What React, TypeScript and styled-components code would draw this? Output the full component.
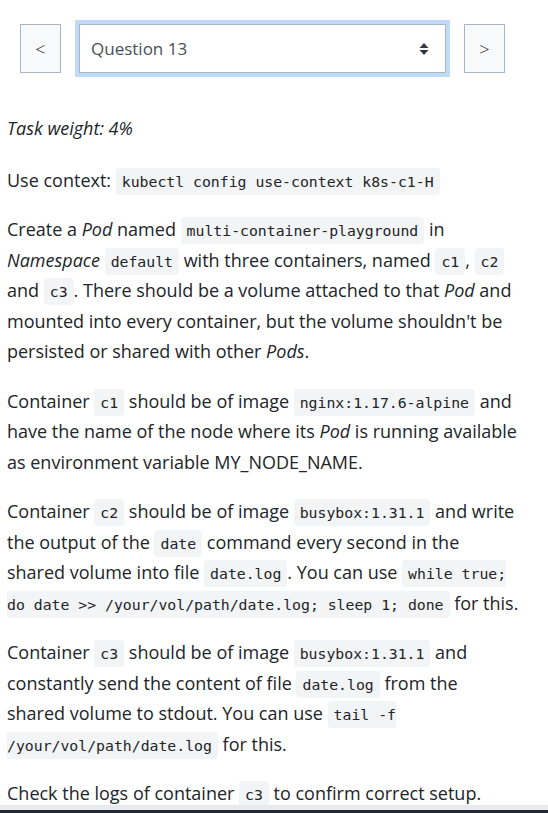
import React from 'react'
import styled, { createGlobalStyle } from 'styled-components'

const GlobalStyle = createGlobalStyle`
  html, body {
    margin: 0;
    padding: 0;
    background: #fff;
  }
  body {
    font-family: 'Open Sans', 'Noto Sans', sans-serif;
    color: #212529;
  }
`

const Page = styled.div`
  width: 548px;
  height: 813px;
  overflow: hidden;
  display: flex;
  flex-direction: column;
`

const Nav = styled.div`
  display: flex;
  align-items: center;
  gap: 18px;
  padding: 24px 43px 0 20px;
`

const NavButton = styled.button`
  width: 41px;
  height: 49px;
  flex: none;
  border: 1px solid #aab5c3;
  background: #f8f9fa;
  color: #212529;
  font-family: 'Open Sans', sans-serif;
  font-size: 18px;
  font-weight: 300;
  padding: 0;
`

const SelectBox = styled.div`
  flex: 1;
  height: 49px;
  box-sizing: border-box;
  border: 1px solid #a9b6c6;
  box-shadow: 0 0 0 4px #bedcfa;
  display: flex;
  align-items: center;
  justify-content: space-between;
  padding: 0 16px 0 11px;
  font-size: 17px;
  color: #495057;
`

const Body = styled.div`
  padding: 40px 27.5px 0 7px;
  flex: 1;
  min-height: 0;
  overflow: hidden;
`

const P = styled.p<{ $gap?: number }>`
  margin: 0 0 ${(p) => p.$gap ?? 19}px;
  font-size: 18px;
  line-height: 30.5px;
`

const Code = styled.code`
  font-family: 'DejaVu Sans Mono', 'Liberation Mono', monospace;
  font-size: 14.8px;
  line-height: 1;
  background: #f3f4f5;
  border-radius: 4px;
  padding: 5px 6px;
`

const Footer = styled.div`
  flex: none;
  height: 3px;
  border-top: 5px solid #e8ebee;
  background: #1e2a35;
`

const Arrows = () => (
  <svg width="10" height="14" viewBox="0 0 10 14">
    <path d="M5 1 L9.5 6 H0.5 Z" fill="#343a40" />
    <path d="M5 13 L9.5 8 H0.5 Z" fill="#343a40" />
  </svg>
)

export default function App() {
  return (
    <>
      <GlobalStyle />
      <Page>
        <Nav>
          <NavButton>&lt;</NavButton>
          <SelectBox>
            <span>Question 13</span>
            <Arrows />
          </SelectBox>
          <NavButton>&gt;</NavButton>
        </Nav>
        <Body>
          <P $gap={21}>
            <em>Task weight: 4%</em>
          </P>
          <P>
            Use context: <Code>kubectl config use-context k8s-c1-H</Code>
          </P>
          <P>
            Create a <em>Pod</em> named <Code>multi-container-playground</Code> in{' '}
            <em>Namespace</em> <Code>default</Code> with three containers, named{' '}
            <Code>c1</Code>, <Code>c2</Code> and <Code>c3</Code>. There should be a volume
            attached to that <em>Pod</em> and mounted into every container, but the volume
            shouldn't be persisted or shared with other <em>Pods</em>.
          </P>
          <P>
            Container <Code>c1</Code> should be of image <Code>nginx:1.17.6-alpine</Code> and
            have the name of the node where its <em>Pod</em> is running available as
            environment variable MY_NODE_NAME.
          </P>
          <P>
            Container <Code>c2</Code> should be of image <Code>busybox:1.31.1</Code> and write
            the output of the <Code>date</Code> command every second in the shared volume into
            file <Code>date.log</Code>. You can use{' '}
            <Code>while true; do date &gt;&gt; /your/vol/path/date.log; sleep 1; done</Code> for
            this.
          </P>
          <P>
            Container <Code>c3</Code> should be of image <Code>busybox:1.31.1</Code> and
            constantly send the content of file <Code>date.log</Code> from the
            <br />
            shared volume to stdout. You can use <Code>tail -f /your/vol/path/date.log</Code>{' '}
            for this.
          </P>
          <P>
            Check the logs of container <Code>c3</Code> to confirm correct setup.
          </P>
        </Body>
        <Footer />
      </Page>
    </>
  )
}
